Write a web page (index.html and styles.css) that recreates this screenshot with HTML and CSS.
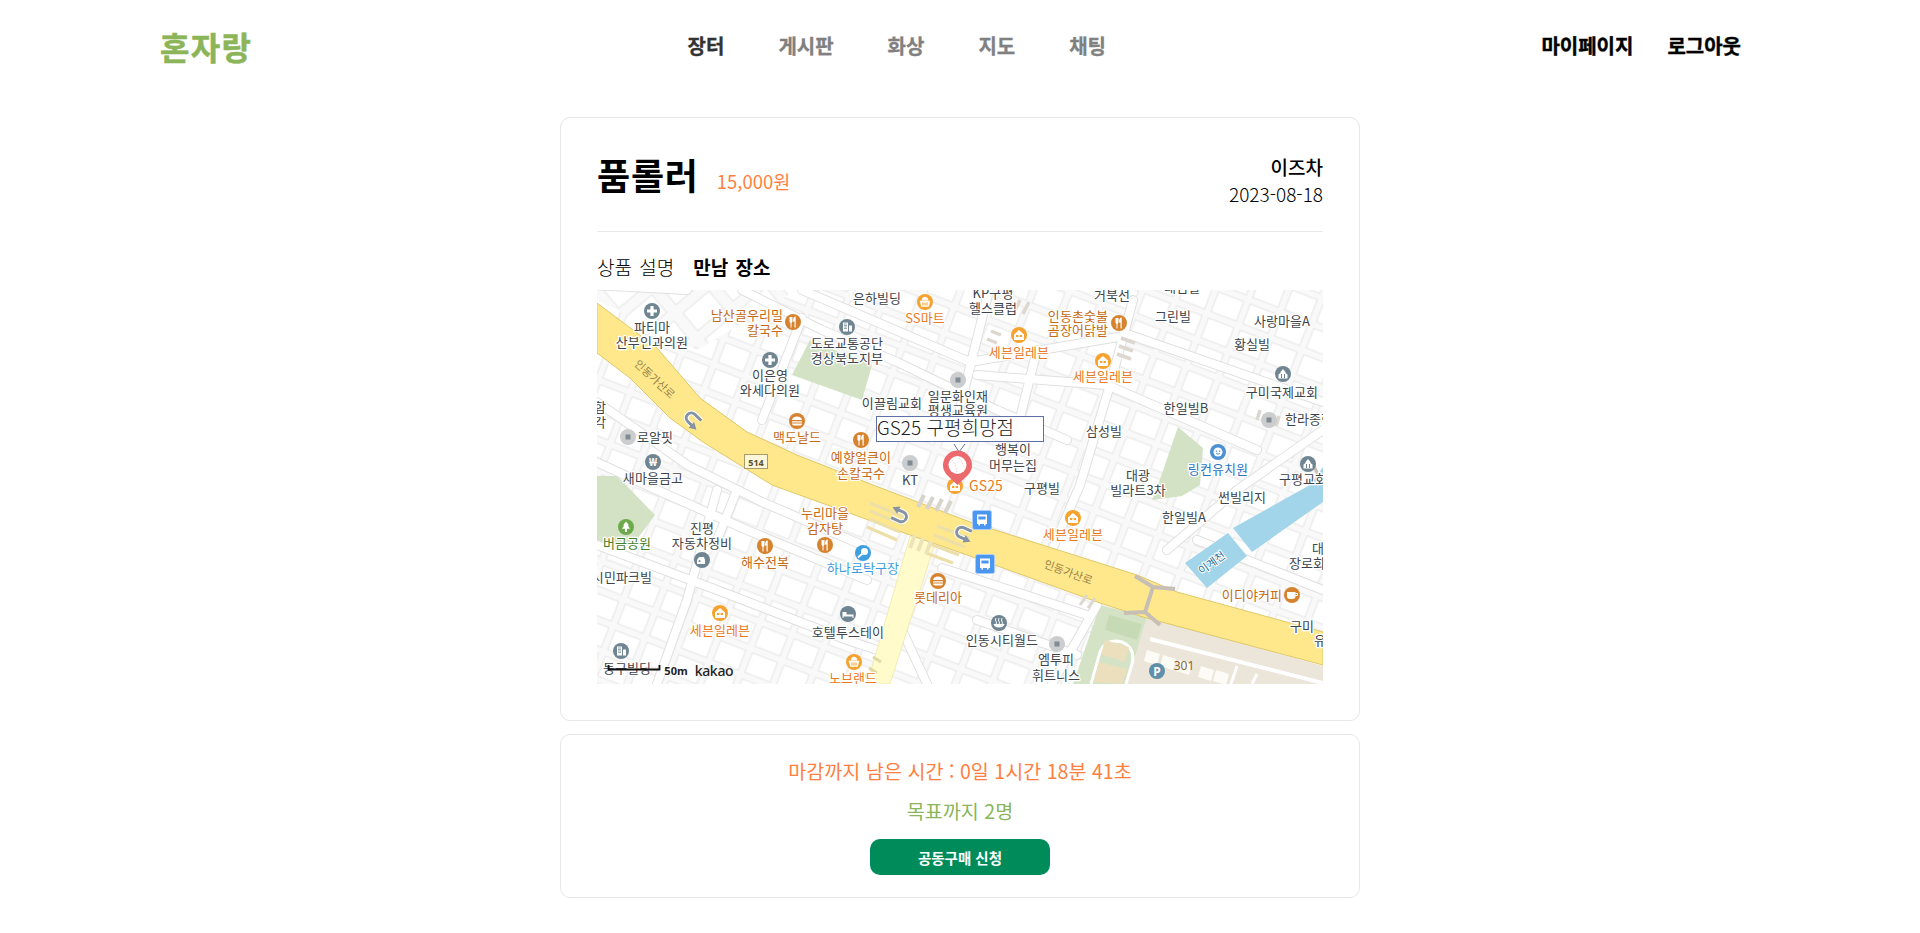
FILE: index.html
```html
<!DOCTYPE html>
<html lang="ko">
<head>
<meta charset="utf-8">
<title>혼자랑</title>
<link rel="stylesheet" href="styles.css">
</head>
<body>
<header class="header">
  <a class="logo">혼자랑</a>
  <nav class="nav">
    <a class="nav-item active">장터</a>
    <a class="nav-item">게시판</a>
    <a class="nav-item">화상</a>
    <a class="nav-item">지도</a>
    <a class="nav-item">채팅</a>
  </nav>
  <div class="user-nav">
    <a class="user-item">마이페이지</a>
    <a class="user-item">로그아웃</a>
  </div>
</header>
<main class="main">
  <section class="card detail">
    <div class="head">
      <div class="title-wrap">
        <h1 class="title">품롤러</h1>
        <span class="price">15,000원</span>
      </div>
      <div class="meta">
        <div class="author">이즈차</div>
        <div class="date">2023-08-18</div>
      </div>
    </div>
    <div class="tabs">
      <span class="tab">상품 설명</span>
      <span class="tab on">만남 장소</span>
    </div>
    <div class="map">
      <svg class="map-svg" viewBox="0 0 726 394" width="726" height="394" xmlns="http://www.w3.org/2000/svg">
        <defs>
          <pattern id="bld" width="34" height="28" patternUnits="userSpaceOnUse" patternTransform="rotate(21)">
            <rect width="34" height="28" fill="#f9f9f9"/>
            <rect x="3" y="3" width="27" height="21" fill="#fff" stroke="#e5e5e5"/>
          </pattern>
          <pattern id="bld2" width="46" height="34" patternUnits="userSpaceOnUse" patternTransform="rotate(-40)">
            <rect width="46" height="34" fill="#f9f9f9"/>
            <rect x="5" y="5" width="34" height="23" fill="#fff" stroke="#e6e6e6"/>
          </pattern>
          <g id="i-hosp"><circle r="8" fill="#6f8592"/><path d="M-1.6-5h3.2v3.4H5v3.2H1.600V5h-3.200V1.600H-5v-3.200h3.400z" fill="#fff"/></g>
          <g id="i-food"><circle r="8" fill="#d6832f"/><path d="M-3.500-5v4.500a1.500 1.500 0 0 0 1 1.400V5.500h1V.9a1.500 1.500 0 0 0 1-1.400V-5M2-5.500c-1.500.5-2 2.500-2 5h1.500v6h1.200v-11z" fill="#fff"/></g>
          <g id="i-burger"><circle r="8" fill="#d6832f"/><path d="M-5-1a5 3.500 0 0 1 10 0zM-5 .3H5v1.200H-5zM-5 2.500H5a2 2 0 0 1-2 2H-3a2 2 0 0 1-2-2z" fill="#fff"/></g>
          <g id="i-bldg"><circle r="8" fill="#6f8592"/><path d="M-4-4.500h5v9h-5zM2-1.500h3v6H2z" fill="#fff"/><path d="M-3-3h3M-3-1.500h3M-3 0h3M-3 1.500h3" stroke="#6f8592" stroke-width=".7"/></g>
          <g id="i-mart"><circle r="8" fill="#f5a32e"/><path d="M-5-1H5L3.500 4.500h-7zM-3-1.500a3 3.500 0 0 1 6 0" fill="#fff" stroke="#fff" stroke-width=".6" fill-opacity=".95"/><path d="M-2 .5v3M0 .5v3M2 .5v3" stroke="#f5a32e"/></g>
          <g id="i-cvs"><circle r="8" fill="#f5a32e"/><path d="M-5-.5 0-5 5-.5V5H-5z" fill="#fff"/><path d="M-3 0h2.400v2H-3zM.6 0H3v2H.6z" fill="#f5a32e"/></g>
          <g id="i-dot"><circle r="8" fill="#cbcdce"/><rect x="-2.500" y="-2.500" width="5" height="5" fill="#808b92"/></g>
          <g id="i-won"><circle r="8" fill="#6f8592"/><text class="ic-t" y="3.500">₩</text></g>
          <g id="i-church"><circle r="8" fill="#6f8592"/><path d="M-4.500 4.500v-4l2-1.500v-1L0-5l2.500 3v1l2 1.500v4z" fill="#fff"/><path d="M-1.500 4V0M1.500 4V0" stroke="#6f8592"/></g>
          <g id="i-kids"><circle r="8" fill="#4a90d2"/><circle r="4.500" fill="#fff"/><circle cx="-1.600" cy="-.8" r=".8" fill="#4a90d2"/><circle cx="1.600" cy="-.8" r=".8" fill="#4a90d2"/><path d="M-2 1.200a2.400 2 0 0 0 4 0" fill="none" stroke="#4a90d2"/></g>
          <g id="i-coffee"><circle r="8" fill="#d6832f"/><path d="M-5-3H3.500V1a3 3 0 0 1-3 3h-2.500a3 3 0 0 1-3-3z" fill="#fff"/><path d="M3.500-1.500h2v2H3" fill="none" stroke="#fff"/></g>
          <g id="i-tree"><circle r="8" fill="#6caa4c"/><path d="M0-5.500 3-1.800H1.800L4 1.800H1V5H-1V1.800H-4L-1.800-1.800H-3z" fill="#fff"/></g>
          <g id="i-car"><circle r="8" fill="#6f8592"/><path d="M-5 4V0l2-3h5l1 3v4zM4-5v4" fill="#fff"/><circle cx="-2.500" cy="1" r="1" fill="#6f8592"/></g>
          <g id="i-hotel"><circle r="8" fill="#6f8592"/><path d="M-5.500-2v6h1V2.500h9V4h1V.5H-1.500V-2zM-3.300-1.500a1.300 1.300 0 1 0 .01 0z" fill="#fff"/></g>
          <g id="i-spa"><circle r="8" fill="#6f8592"/><path d="M-3-5q-1 2 0 3.500t0 2.500M0-5q-1 2 0 3.500t0 2.500M3-5q-1 2 0 3.500t0 2.500" fill="none" stroke="#fff"/><path d="M-5.500 1a5.500 3.500 0 0 0 11 0" fill="#fff"/></g>
          <g id="i-ping"><circle r="8" fill="#3f9fe0"/><circle cx="1.500" cy="-1.500" r="3.500" fill="#fff"/><path d="M-.5.500-5 4.500" stroke="#fff" stroke-width="1.800"/></g>
          <g id="i-bus"><rect x="-9.500" y="-9.500" width="19" height="19" rx="2" fill="#4b96f0" stroke="#a9cdf5"/><path d="M-5-5.500H5V4H3.600v1.500H2V4h-4v1.500h-1.600V4H-5z" fill="#fff"/><path d="M-3.600-3.500h7.200v3h-7.200z" fill="#4b96f0"/></g>
          <g id="i-u"><path d="M7-6H-2a5 5 0 0 0 0 10H5" transform="rotate(24)" fill="none" stroke="#fff" stroke-width="5"/><path d="M7-6H-2a5 5 0 0 0 0 10H5" transform="rotate(24)" fill="none" stroke="#8593a3" stroke-width="3"/><path d="M3 0 10 4 3 8z" transform="rotate(24)" fill="#8593a3"/></g>
          <clipPath id="mapclip"><rect width="726" height="394"/></clipPath>
        </defs>

        <g clip-path="url(#mapclip)">
          <rect width="726" height="394" fill="url(#bld)"/>
          <polygon points="0,0 200,0 100,60 0,10" fill="url(#bld2)"/>

          <!-- green & land use -->
          <polygon points="213,50 275,75 265,110 195,85" fill="#d3e2c4"/>
          <polygon points="581,137 606,158 603,195 585,206 555,210 561,195" fill="#d3e2c4"/>
          <polygon points="0,186 20,186 58,225 38,252 0,252" fill="#d3e2c4"/>
          <polygon points="550,327 726,376 726,394 530,394" fill="#ece5d9"/>
          <polygon points="503,315 550,327 530,394 476,394" fill="#d4e3c5"/>
          <polygon points="512,325 545,334 540,350 508,340" fill="#c6dbb5"/>
          <path d="M494,394 503,362q6-14 22-10q14 6 10 22l-6,20" fill="none" stroke="#fff" stroke-width="3"/>
          <polygon points="497,392 502,372 530,379 525,394" fill="#ecdfbd"/>
          <polygon points="504,364 508,350 532,357 528,372" fill="#ecdfbd"/>
          <polyline points="553,349 726,393" fill="none" stroke="#fff" stroke-width="4"/>
          <g fill="#fdfbf6">
            <polygon points="550,360 563,364 560,375 547,371"/>
            <polygon points="566,365 579,369 576,380 563,376"/>
            <polygon points="582,370 595,374 592,385 579,381"/>
            <polygon points="604,376 617,380 614,391 601,387"/>
            <polygon points="619,380 632,384 629,395 616,391"/>
          </g>
          <path d="M634,394 640,376M655,394 660,384" stroke="#fff" stroke-width="3" fill="none"/>

          <!-- secondary roads -->
          <g fill="none" stroke-linecap="round" stroke-linejoin="round">
            <g stroke="#e0e0e0" stroke-width="10">
              <path d="M-5,-5 90,0M0,112 92,176 165,212 265,255M-5,170 60,200 150,240 270,290M0,255 120,300 250,350 280,360M120,200 90,310 60,394"/>
              <path d="M205,28 165,130M145,0 225,40 300,72 400,120 470,150M205,0 373,72 533,45M533,45 726,112M380,85 510,95 660,160"/>
              <path d="M536,10 513,95 483,195 455,260M392,0 360,130M440,60 415,160M726,140 640,200 570,260M600,250 726,300M500,315 455,394M345,278 493,326"/>
              <path d="M380,330 480,365M305,340 330,394M140,200 120,250"/>
            </g>
            <g stroke="#fff" stroke-width="8">
              <path d="M-5,-5 90,0M0,112 92,176 165,212 265,255M-5,170 60,200 150,240 270,290M0,255 120,300 250,350 280,360M120,200 90,310 60,394"/>
              <path d="M205,28 165,130M145,0 225,40 300,72 400,120 470,150M205,0 373,72 533,45M533,45 726,112M380,85 510,95 660,160"/>
              <path d="M536,10 513,95 483,195 455,260M392,0 360,130M440,60 415,160M726,140 640,200 570,260M600,250 726,300M500,315 455,394M345,278 493,326"/>
              <path d="M380,330 480,365M305,340 330,394M140,200 120,250"/>
            </g>
          </g>

          <!-- water -->
          <polygon points="588,273 631,243 650,266 610,298" fill="#a3d5ea"/>
          <polygon points="636,238 713,195 726,177 726,212 655,262" fill="#a3d5ea"/>
          <polyline points="714,170 726,195" fill="none" stroke="#c7bfb5" stroke-width="3"/>

          <!-- main roads -->
          <polygon points="313,246 338,253 293,394 270,394" fill="#fffbca" stroke="#eee4a8" stroke-width=".7"/>
          <polygon points="0,13 60,58 103,108 150,142 200,165 276,195 373,232 540,285 580,302 726,342 726,375 546,327 503,313 373,266 313,245 175,195 106,152 73,128 33,88 0,63" fill="#ffe88b" stroke="#dfc868" stroke-width="1"/>
          <path d="M273,213 309,228M273,221 307,235M272,229 303,242M270,237 300,250M340,236 372,248M337,245 368,257M333,254 362,265M329,263 356,273" stroke="#ecdfa8" stroke-width="3" fill="none"/>
          <path d="M318,245 313,258M326,248 321,261M334,251 329,264" stroke="#ece3bc" stroke-width="4"/>
          <path d="M268,384 274,394M276,367 284,372M272,378 280,383" stroke="#e0d8a4" stroke-width="3"/>
          <path d="M327,205 321,217M336,207 330,219M345,209 339,221M354,211 348,223" stroke="#d9d4cb" stroke-width="4"/>
          <path d="M423,10 417,22M432,12 426,24M394,41l10,4M390,49l10,4M524,48l14,5M522,56l14,5M520,64l14,5M663,120l-3,10M672,123l-3,10M682,126l-3,10" stroke="#dcd7cf" stroke-width="3.500"/>
          <path d="M490,305 483,315M498,308 491,318" stroke="#dcd7cf" stroke-width="3"/>

          <!-- bridge -->
          <g fill="none" stroke="#c7bfb5" stroke-width="4">
            <path d="M538,286 556,297 578,299M556,297 548,322 527,323M548,322 563,335"/>
          </g>

          <use href="#i-u" x="0" y="0" transform="translate(95 130) rotate(20)"/>
          <use href="#i-u" x="0" y="0" transform="translate(303 225) rotate(180)"/>
          <use href="#i-u" x="366" y="244"/>

          <!-- road badge -->
          <rect x="147.500" y="164.500" width="23" height="14" fill="#fdf6d8" stroke="#a99a6a"/>
          <text class="badge-t" x="159" y="175.500">514</text>

          <!-- road names -->
          <text class="road" transform="translate(55 92) rotate(43)">인동가산로</text>
          <text class="road" transform="translate(470 286) rotate(20)">인동가산로</text>
          <text class="water" transform="translate(617 276) rotate(-36)">이계천</text>

          <!-- icons -->
          <use href="#i-hosp" x="55" y="21"/><use href="#i-hosp" x="173" y="70"/>
          <use href="#i-food" x="196" y="32"/><use href="#i-food" x="264" y="150"/><use href="#i-food" x="522" y="33"/><use href="#i-food" x="168" y="256"/><use href="#i-food" x="228" y="255"/>
          <use href="#i-burger" x="200" y="131"/><use href="#i-burger" x="341" y="291"/>
          <use href="#i-bldg" x="250" y="37"/><use href="#i-bldg" x="24" y="361"/>
          <use href="#i-mart" x="328" y="12"/><use href="#i-mart" x="257" y="372"/>
          <use href="#i-dot" x="361" y="90"/><use href="#i-dot" x="31" y="147"/><use href="#i-dot" x="313" y="173"/><use href="#i-dot" x="672" y="130"/><use href="#i-dot" x="460" y="354"/>
          <use href="#i-won" x="56" y="172"/>
          <use href="#i-cvs" x="422" y="45"/><use href="#i-cvs" x="506" y="71"/><use href="#i-cvs" x="476" y="228"/><use href="#i-cvs" x="123" y="323"/><use href="#i-cvs" x="358" y="196"/>
          <use href="#i-church" x="686" y="84"/><use href="#i-church" x="711" y="174"/>
          <use href="#i-kids" x="621" y="162"/>
          <use href="#i-coffee" x="695" y="305"/>
          <use href="#i-tree" x="29" y="237"/>
          <use href="#i-car" x="105" y="270"/>
          <use href="#i-hotel" x="251" y="324"/>
          <use href="#i-spa" x="402" y="333"/>
          <use href="#i-ping" x="266" y="263"/>
          <use href="#i-bus" x="385" y="230"/><use href="#i-bus" x="388" y="274"/>
          <circle cx="560" cy="381" r="8" fill="#5f8fa9"/>
          <text class="ic-p" x="560" y="385.500">P</text>

          <!-- dark labels -->
          <g class="lb">
            <text x="55" y="42">파티마</text><text x="55" y="57">산부인과의원</text>
            <text x="280" y="13">은하빌딩</text>
            <text x="250" y="58">도로교통공단</text><text x="250" y="73">경상북도지부</text>
            <text x="173" y="90">이은영</text><text x="173" y="105">와세다의원</text>
            <text x="295" y="118">이끌림교회</text>
            <text x="361" y="111">일문화인재</text><text x="361" y="125">평생교육원</text>
            <text x="58" y="152">로알핏</text>
            <text x="3" y="122">합</text><text x="3" y="137">각</text>
            <text x="313" y="195">KT</text>
            <text x="56" y="193">새마을금고</text>
            <text x="396" y="8">KP구평</text><text x="396" y="23">헬스클럽</text>
            <text x="515" y="10">거북선</text>
            <text x="585" y="2">대림빌</text>
            <text x="576" y="31">그린빌</text>
            <text x="685" y="36">사랑마을A</text>
            <text x="655" y="59">황실빌</text>
            <text x="685" y="107">구미국제교회</text>
            <text x="589" y="123">한일빌B</text>
            <text x="712" y="134">한라종합</text>
            <text x="507" y="146">삼성빌</text>
            <text x="416" y="164">행복이</text><text x="416" y="180">머무는집</text>
            <text x="541" y="190">대광</text><text x="541" y="205">빌라트3차</text>
            <text x="706" y="194">구평교회</text>
            <text x="445" y="203">구평빌</text>
            <text x="645" y="212">썬빌리지</text>
            <text x="587" y="232">한일빌A</text>
            <text x="721" y="263">대</text><text x="710" y="278">장로회</text>
            <text x="705" y="341">구미</text><text x="723" y="355">유</text>
            <text x="405" y="355">인동시티월드</text>
            <text x="459" y="374">엠투피</text><text x="459" y="390">휘트니스</text>
            <text x="105" y="243">진평</text><text x="105" y="258">자동차정비</text>
            <text x="25" y="292">시민파크빌</text>
            <text x="251" y="347">호텔투스테이</text>
            <text x="30" y="383">동구빌딩</text>
          </g>
          <g class="lb lb-or">
            <text x="150" y="30">남산골우리밀</text><text x="168" y="45">칼국수</text>
            <text x="200" y="152">맥도날드</text>
            <text x="264" y="172">예향얼큰이</text><text x="264" y="188">손칼국수</text>
            <text x="481" y="31">인동촌숯불</text><text x="481" y="45">곰장어닭발</text>
            <text x="228" y="228">누리마을</text><text x="228" y="243">감자탕</text>
            <text x="168" y="277">해수전복</text>
            <text x="341" y="312">롯데리아</text>
            <text x="655" y="310">이디야커피</text>
          </g>
          <g class="lb lb-lo">
            <text x="328" y="33">SS마트</text>
            <text x="422" y="67">세븐일레븐</text>
            <text x="506" y="91">세븐일레븐</text>
            <text class="lb-gs" x="389" y="201">GS25</text>
            <text x="476" y="249">세븐일레븐</text>
            <text x="123" y="345">세븐일레븐</text>
            <text x="256" y="393">노브랜드</text>
          </g>
          <text class="lb lb-bl" x="621" y="184">링컨유치원</text>
          <text class="lb lb-sky" x="266" y="283">하나로탁구장</text>
          <text class="lb lb-gr" x="30" y="258">버금공원</text>
          <text class="num" x="587" y="380">301</text>

          <!-- scale & logo -->
          <path d="M11.500 375v4.500h51V375" fill="none" stroke="#111" stroke-width="1.800"/>
          <text class="scale" x="79" y="385">50m</text>
          <text class="kakao" x="117" y="386">kakao</text>

          <!-- marker -->
          <path d="M357,154 362,162 368,154" fill="none" stroke="#5f6fa8"/>
          <path d="M360.500,195 350,185a14.500 14.500 0 1 1 21,0z" fill="#ec6a6e"/>
          <circle cx="360.500" cy="175" r="9" fill="#fff"/>
          <path d="M355,170q4,5 5,12M362,168q4,4 5,10" fill="none" stroke="#f5c8c8" stroke-dasharray="1.500 1.500"/>
          <rect class="iw" x="279.500" y="126.500" width="167" height="25"/>
          <text class="iw-t" x="280" y="145">GS25 구평희망점</text>
        </g>
      </svg>
    </div>
  </section>
  <section class="card status">
    <p class="remain">마감까지 남은 시간 : 0일 1시간 18분 41초</p>
    <p class="goal">목표까지 2명</p>
    <button class="apply">공동구매 신청</button>
  </section>
</main>
</body>
</html>
```

FILE: styles.css
```css
* { box-sizing: border-box; }
html, body { margin: 0; padding: 0; background: #fff; }
body { font-family: "Noto Sans CJK KR", "Noto Sans", sans-serif; color: #000; height: 933px; overflow: hidden; }

.header { display: flex; justify-content: space-between; align-items: center; height: 92px; padding: 0 179px 0 160px; }
.logo { font-size: 32px; font-weight: 700; color: #8bb558; letter-spacing: 1.300px; line-height: 1; -webkit-text-stroke: .5px #8bb558; }
.nav { display: flex; gap: 54px; }
.nav-item { font-size: 20px; font-weight: 700; color: #808080; line-height: 1; -webkit-text-stroke: .3px #808080; }
.nav-item.active { color: #333; -webkit-text-stroke: .3px #333; }
.user-nav { display: flex; gap: 34px; }
.user-item { font-size: 20px; font-weight: 700; line-height: 1; letter-spacing: 0; -webkit-text-stroke: .4px #000; }

.main { display: flex; flex-direction: column; align-items: center; gap: 13px; padding-top: 25px; }
.card { width: 800px; background: #fff; border: 1px solid #e5e7eb; border-radius: 10px; }
.detail { height: 604px; padding: 34px 36px 36px; }
.head { display: flex; justify-content: space-between; align-items: flex-start; height: 80px; border-bottom: 1px solid #e5e7eb; }
.title-wrap { display: flex; align-items: flex-end; gap: 18px; height: 44px; }
.title { margin: 0; font-size: 36px; font-weight: 700; line-height: 44px; letter-spacing: .8px; }
.price { font-size: 18.500px; line-height: 28px; color: #ff7f3f; font-weight: 400; margin-bottom: 1px; }
.meta { text-align: right; padding-top: 1px; }
.author { font-size: 19px; font-weight: 500; line-height: 27px; }
.date { font-size: 19px; font-weight: 300; line-height: 28px; }
.tabs { display: flex; gap: 19px; height: 58px; padding-top: 21px; }
.tab { font-size: 19px; line-height: 28px; font-weight: 300; word-spacing: 2px; }
.tab.on { font-weight: 700; }
.map { width: 726px; height: 394px; }
.map-svg { display: block; }

.status { height: 164px; display: flex; flex-direction: column; align-items: center; padding-top: 21px; }
.remain { margin: 0; font-size: 19.600px; line-height: 30px; font-weight: 400; color: #ff7f3f; }
.goal { margin: 10px 0 0; font-size: 19.600px; line-height: 30px; font-weight: 400; color: #8bb558; }
.apply { margin-top: 13px; width: 180px; height: 36px; border: 0; border-radius: 10px; background: #008c5a; color: #fff; font: 700 14.500px "Noto Sans CJK KR", sans-serif; }

.lb text, text.lb { font-family: "Noto Sans CJK KR", sans-serif; font-size: 13px; text-anchor: middle; fill: #3d434a; stroke: #fff; stroke-width: 2.500px; paint-order: stroke; stroke-linejoin: round; letter-spacing: .1px; }
.lb-or text { fill: #c56a12; }
.lb-lo text { fill: #ea7a1c; }
.lb-lo text.lb-gs { font-size: 14px; }
text.lb-bl { fill: #2a74c4; }
text.lb-sky { fill: #3d9be0; }
text.lb-gr { fill: #47802a; }
.road { font: 11px "Noto Sans CJK KR", sans-serif; fill: #97834a; text-anchor: middle; }
.water { font: 11px "Noto Sans CJK KR", sans-serif; fill: #2f6f94; text-anchor: middle; stroke: #fff; stroke-width: 2px; paint-order: stroke; }
.num { font: 12px "Noto Sans", sans-serif; fill: #86663a; text-anchor: middle; }
.badge-t { font: 700 9px "Noto Sans", sans-serif; fill: #5a4f2c; text-anchor: middle; }
.ic-t { font: 700 11px "Noto Sans", sans-serif; fill: #fff; text-anchor: middle; }
.ic-p { font: 700 12px "Noto Sans", sans-serif; fill: #fff; text-anchor: middle; }
.scale { font: 700 11px "Noto Sans", sans-serif; fill: #222; text-anchor: middle; stroke: #fff; stroke-width: 2px; paint-order: stroke; }
.kakao { font: 500 14px "Noto Sans", sans-serif; fill: #222; text-anchor: middle; letter-spacing: -.3px; }
.iw { fill: #fff; stroke: #5f6fa8; }
.iw-t { font: 300 19px "Noto Sans CJK KR", sans-serif; fill: #222; }
```
